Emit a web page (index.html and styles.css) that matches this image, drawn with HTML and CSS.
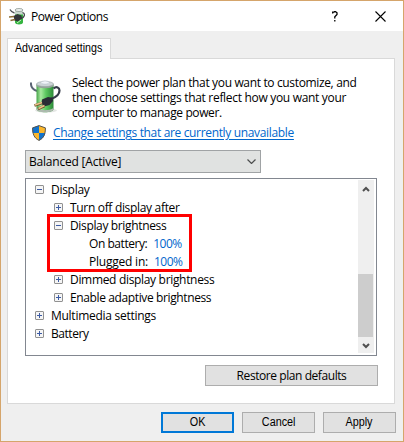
FILE: index.html
```html
<!DOCTYPE html>
<html lang="en">
<head>
<meta charset="utf-8">
<title>Power Options</title>
<link rel="stylesheet" href="styles.css">
</head>
<body>
<main class="window">
  <header class="titlebar">
    <svg class="app-icon" viewBox="0 0 16 17">
      <path d="M6 2.500v12c0 2.500 8 2.500 8 0v-12z" fill="#35b540"/>
      <path d="M6 2.500v4h8v-4z" fill="#c7d6cc"/>
      <ellipse cx="10" cy="2" rx="4" ry="1.500" fill="#eef2f0" stroke="#7e8a84" stroke-width=".7"/>
      <path d="M1 1.500c1 2 2 3 4.500 3.500M13.500 4.500c3 1 2.500 5-1.500 6" fill="none" stroke="#4a4d50" stroke-width="1.300"/>
      <path d="M4.500 8l4-2 4 1.500.5 3-4 3-3.500-1z" fill="#333539"/>
      <path d="M0 9l5-.5M1.500 12.500l4.500-1" stroke="#8b6d35" stroke-width="1.700"/>
      <path d="M8 15l4-3" stroke="#c4f2c0"/>
    </svg>
    <h1>Power Options</h1>
    <svg class="help" viewBox="0 0 6 11"><path d="M.7 2.500V1.200H2L2.500.7h1L5 1.800v1.700L2.800 5.700v1.800M2.800 9v1.500" fill="none" stroke="#000" stroke-width="1.300"/></svg>
    <svg class="close" viewBox="0 0 11 11"><path d="M.5.5l10 10M10.500.5l-10 10" stroke="#000" stroke-width="1.100"/></svg>
  </header>
  <nav class="tabs"><span class="tab"><span class="t-tab">Advanced settings</span></span></nav>
  <section class="panel">
    <div class="intro">
      <svg class="plan-icon" viewBox="0 0 32 34">
        <defs>
          <linearGradient id="green" x1="0" x2="1" y1="0" y2="0">
            <stop offset="0" stop-color="#46a548"/><stop offset=".25" stop-color="#a8e8a0"/><stop offset=".55" stop-color="#5cc860"/><stop offset="1" stop-color="#2c8a38"/>
          </linearGradient>
        </defs>
        <ellipse cx="16" cy="31.500" rx="11" ry="2" fill="#e4e6e4"/>
        <path d="M1 3.500C.5 8 3 10.500 7 12" fill="none" stroke="#5a6474" stroke-width="2"/>
        <path d="M6.500 5.500V30c0 4.300 17 4.300 17 0V5.500z" fill="url(#green)"/>
        <path d="M6.500 28.500V30c0 4.300 17 4.300 17 0v-1.500c-2 3.500-15 3.500-17 0z" fill="#aeb9b0"/>
        <path d="M6.500 5v2c2 3 15 3 17 0V5z" fill="#93a398"/>
        <ellipse cx="15" cy="5" rx="8.500" ry="2.600" fill="#ccd4d6" stroke="#98a5a6" stroke-width=".6"/>
        <ellipse cx="15" cy="3.500" rx="4" ry="1.600" fill="#f0f4f8" stroke="#b4bfca" stroke-width=".5"/>
        <path d="M23.500 9.500c3-2.500 6-1 6 2 0 4.500-3 6.500-8.500 8.500" fill="none" stroke="#353b49" stroke-width="2.200"/>
        <path d="M12 20.500l6-2.500 4.500.7L23 22l-3.500 4-5.500 1.500-2.500-3z" fill="#292b35"/>
        <path d="M12 24l-7.500 2.500M14.500 27L8 30" stroke="#75552d" stroke-width="2.600"/>
        <path d="M12 23.500L5 26M14.500 26.500L8.500 29.500" stroke="#e8c38b" stroke-width="1.500"/>
      </svg>
      <p><span class="line i1">Select the power plan that you want to customize, and</span><span class="line i2">then choose settings that reflect how you want your</span><span class="line i3">computer to manage power.</span></p>
    </div>
    <div class="admin">
      <svg class="shield" viewBox="0 0 14 16"><path d="M7 .5l6.500 2.300C13.500 9 12 13 7 15.500 2 13 .5 9 .5 2.800z" fill="#fcb72b"/><path d="M7 .5v7.500H.8C.5 6 .5 4 .5 2.800zM7 8h6.200C12.500 11.500 10.500 14 7 15.500z" fill="#1273cc"/><path d="M7 .6l6.400 2.300C13.400 9 12 13 7 15.400 2 13 .6 9 .6 2.900z" fill="none" stroke="#555"/></svg>
      <a class="link">Change settings that are currently unavailable</a>
    </div>
    <div class="select"><span class="t-sel">Balanced [Active]</span><svg viewBox="0 0 9 5"><path d="M.5.5l4 4 4-4" fill="none" stroke="#4c4e4e" stroke-width="1.200"/></svg></div>
    <div class="list">
      <ul class="tree">
        <li><i class="box"></i><span class="r1">Display</span></li>
        <li class="l2"><i class="box plus"></i><span class="r2">Turn off display after</span></li>
        <li class="l2"><i class="box"></i><span class="r3">Display brightness</span></li>
        <li class="l3"><span class="r4">On battery:</span><b>100%</b></li>
        <li class="l3"><span class="r5">Plugged in:</span><b>100%</b></li>
        <li class="l2"><i class="box plus"></i><span class="r6">Dimmed display brightness</span></li>
        <li class="l2"><i class="box plus"></i><span class="r7">Enable adaptive brightness</span></li>
        <li><i class="box plus"></i><span class="r8">Multimedia settings</span></li>
        <li><i class="box plus"></i><span class="r9">Battery</span></li>
      </ul>
      <div class="scroll">
        <svg viewBox="0 0 8 6"><path d="M1 5l3-3 3 3" fill="none" stroke="#505050" stroke-width="2"/></svg>
        <div class="thumb"></div>
        <svg viewBox="0 0 8 6"><path d="M1 1l3 3 3-3" fill="none" stroke="#505050" stroke-width="2"/></svg>
      </div>
      <div class="highlight"></div>
    </div>
    <button class="restore"><span class="t-res">Restore plan defaults</span></button>
  </section>
  <footer>
    <button class="default"><span class="t-btn">OK</span></button>
    <button><span class="t-btn">Cancel</span></button>
    <button><span class="t-btn">Apply</span></button>
  </footer>
</main>
</body>
</html>
```
FILE: styles.css
```css
* { box-sizing: border-box; }
body { margin: 0; font: 12px/15px "Open Sans", "Noto Sans", sans-serif; color: #000; }
svg { display: block; flex: none; }
span, a, b { white-space: nowrap; }
.window { width: 404px; height: 442px; border: 1px solid #d5a56b; background: #efefef; display: flex; flex-direction: column; }
.titlebar { height: 30px; background: #fff; display: flex; align-items: center; padding: 0 17px 0 8px; flex: none; }
.app-icon { width: 16px; height: 17px; }
h1 { margin: 0 auto 0 6px; font-size: 12px; font-weight: 400; letter-spacing: -.45px; }
.help { width: 6px; height: 11px; margin-right: 37px; }
.close { width: 11px; height: 11px; }
.tabs { height: 27px; padding: 7px 0 0 6px; flex: none; }
.tab { display: block; width: 104px; height: 21px; border: 1px solid #d9d9d9; border-bottom: 0; background: #fff; position: relative; z-index: 1; padding: 2px 0 0 7px; font-family: "Liberation Sans", sans-serif; }
.t-tab { display: inline-block; transform: scaleX(.89); transform-origin: left; }
.panel { width: 388px; height: 346px; margin-left: 6px; border: 1px solid #d9d9d9; background: #fff; padding: 16px 16px 0 17px; display: flex; flex-direction: column; flex: none; }
.intro { display: flex; height: 46px; }
.plan-icon { width: 32px; height: 34px; margin: 4px 10px 0 5px; }
p { margin: 0; }
.line { display: block; }
.i1 { letter-spacing: -.35px; }
.i2 { letter-spacing: -.31px; }
.i3 { letter-spacing: -.38px; }
.admin { display: flex; height: 29px; padding-top: 4px; }
.shield { width: 14px; height: 16px; margin: 0 7px 0 7px; }
.link { color: #0066cc; text-decoration: underline; text-underline-offset: 2px; height: 16px; letter-spacing: -.34px; }
.select { width: 236px; height: 23px; border: 1px solid #a0a3a5; background: #e0e2e1; display: flex; align-items: center; justify-content: space-between; padding: 0 4px 0 3px; flex: none; }
.t-sel { letter-spacing: -.2px; }
.select svg { width: 9px; height: 5px; }
.list { position: relative; width: 352px; height: 178px; margin-top: 5px; border: 1px solid #828790; display: flex; justify-content: space-between; padding: 1px; flex: none; }
.tree { list-style: none; margin: 0; padding: 0 0 0 8px; }
.tree li { height: 18px; display: flex; align-items: center; }
.tree .l2 { padding-left: 19px; }
.tree .l3 { padding-left: 54px; }
.box { width: 9px; height: 9px; border: 1px solid #919191; border-radius: 1px; margin-right: 7px; background: linear-gradient(#3c5ba4, #3c5ba4) center/5px 1px no-repeat, #f5f5f5; }
.plus { background: linear-gradient(#3c5ba4, #3c5ba4) center/5px 1px no-repeat, linear-gradient(#3c5ba4, #3c5ba4) center/1px 5px no-repeat, #f5f5f5; }
.tree b { font-weight: 400; color: #0066cc; margin-left: 6px; letter-spacing: -.5px; }
.r1 { letter-spacing: -.28px; }
.r2, .r6 { letter-spacing: -.32px; }
.r3 { letter-spacing: -.35px; }
.r4 { letter-spacing: -.45px; }
.r5 { letter-spacing: -.22px; }
.r7 { letter-spacing: -.38px; }
.r8 { letter-spacing: -.27px; }
.r9 { letter-spacing: -.45px; }
.scroll { width: 16px; height: 173px; margin-right: 1px; background: #efefef; display: flex; flex-direction: column; align-items: center; }
.scroll svg { width: 8px; height: 6px; margin-top: 6px; }
.thumb { width: 15px; height: 63px; margin-top: 82px; align-self: flex-start; background: #cdcdcd; }
.highlight { position: absolute; left: 21px; top: 35px; width: 145px; height: 58px; border: 3px solid #f00; }
button { width: 73px; height: 21px; padding: 0; border: 1px solid #adadad; background: #e1e1e1; font: 12px/15px "Liberation Sans", sans-serif; color: #000; display: flex; align-items: center; justify-content: center; flex: none; }
.restore { width: 173px; margin: 9px 0 0 auto; font-family: "Open Sans", sans-serif; }
.t-res { letter-spacing: -.43px; }
.t-btn { transform: scaleX(.9); }
footer { display: flex; gap: 8px; padding: 8px 0 0 160px; }
.default { border: 2px solid #0078d7; }
```
